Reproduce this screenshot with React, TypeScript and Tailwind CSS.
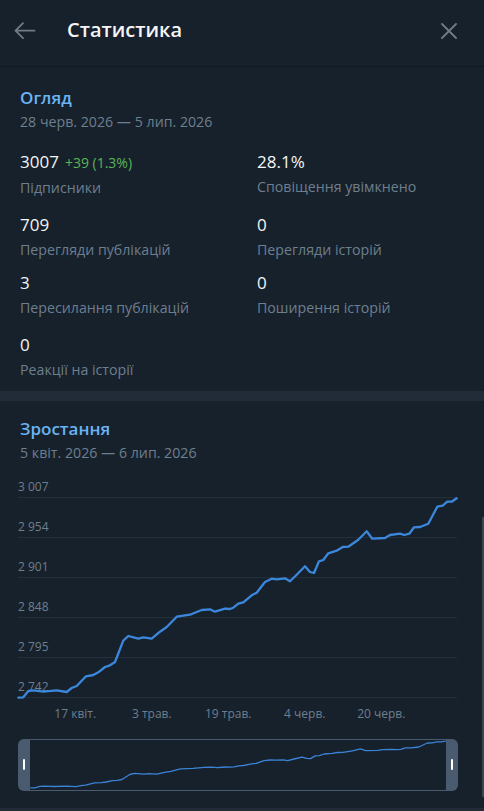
import React from "react";

type Stat = { value: string; label: string; delta?: string };

const statRows: { gap: string; items: Stat[] }[] = [
  {
    gap: "mt-[19.5px]",
    items: [
      { value: "3007", delta: "+39 (1.3%)", label: "Підписники" },
      { value: "28.1%", label: "Сповіщення увімкнено" },
    ],
  },
  {
    gap: "mt-[16px]",
    items: [
      { value: "709", label: "Перегляди публікацій" },
      { value: "0", label: "Перегляди історій" },
    ],
  },
  {
    gap: "mt-[12px]",
    items: [
      { value: "3", label: "Пересилання публікацій" },
      { value: "0", label: "Поширення історій" },
    ],
  },
  {
    gap: "mt-[15.5px]",
    items: [{ value: "0", label: "Реакції на історії" }],
  },
];

const yTicks = ["3 007", "2 954", "2 901", "2 848", "2 795", "2 742"];
const xTicks = ["17 квіт.", "3 трав.", "19 трав.", "4 черв.", "20 черв."];

// subscriber curve in plot space: 439 x 200, origin at the top grid line
const points: [number, number][] = [
  [0.3, 199.7], [5.3, 199.3], [10.3, 193], [15.3, 192.3], [25.3, 193.7],
  [38.7, 192.3], [48.7, 194], [53.7, 190], [58.7, 188], [68, 178.3],
  [75.3, 177], [80.3, 174.3], [87, 169], [92, 167.3], [97, 164],
  [105.3, 142.7], [110.3, 138], [120.3, 140.7], [125.3, 139.3], [133.7, 140.7],
  [142, 133.7], [148.7, 129], [158.7, 118.7], [172, 116.7], [183.7, 112],
  [192, 111.3], [197, 113.7], [207, 110.7], [212, 111], [215.3, 109.7],
  [220.3, 105.7], [225.3, 104.3], [233.7, 97.3], [238.7, 94.7], [247, 84],
  [253.7, 80.7], [258.7, 81.3], [267, 80.3], [272, 83.3], [278.7, 76.7],
  [287, 68.3], [292, 74], [296, 75], [301, 63.3], [305.3, 62],
  [310.3, 55.3], [318.7, 52.7], [324.7, 49], [330.3, 48.7], [340.3, 41.7],
  [348.7, 33.3], [354.3, 40.7], [367, 40], [372, 37], [382, 35.7],
  [386.3, 37], [391.3, 35.7], [396, 29.3], [402, 29], [410.3, 25.7],
  [419.3, 8.7], [424.7, 7.7], [429.3, 3.7], [433.7, 3.7], [438.7, 0.3],
];

const mainLine = points.map(([x, y]) => `${x},${y}`).join(" ");
const miniLine = points
  .map(([x, y]) => `${((x / 439) * 416).toFixed(1)},${(1 + y * 0.235).toFixed(1)}`)
  .join(" ");

const BackIcon = () => (
  <svg width="22" height="20" viewBox="0 0 22 20" fill="none" stroke="#6f7b87" strokeWidth="1.8" strokeLinecap="round" strokeLinejoin="round">
    <path d="M1.5 9.7H20.5M9 2.2L1.5 9.7L9 17.2" />
  </svg>
);

const CloseIcon = () => (
  <svg width="16" height="16" viewBox="0 0 16 16" fill="none" stroke="#6f7b87" strokeWidth="1.8" strokeLinecap="round">
    <path d="M1 1L15 15M15 1L1 15" />
  </svg>
);

const SectionTitle = ({ title, range }: { title: string; range: string }) => (
  <>
    <h2 className="text-[17px] leading-[24px] font-semibold text-[#6ab3f3]">{title}</h2>
    <p className="mt-[1.5px] text-[14.2px] leading-[20px] text-[#6d7f8f]">{range}</p>
  </>
);

export default function App() {
  return (
    <div
      className="relative h-[811px] w-[484px] overflow-hidden bg-[#17212b]"
      style={{ fontFamily: '"Open Sans", "Noto Sans", sans-serif' }}
    >
      <header className="flex h-[67px] items-center border-b border-[#101921] pr-[27px] pb-[4px] pl-[14px]">
        <BackIcon />
        <h1 className="mb-[2px] ml-[31px] text-[20px] leading-[28px] font-semibold text-[#f5f5f5]">Статистика</h1>
        <button className="ml-auto">
          <CloseIcon />
        </button>
      </header>

      <section className="px-[20px] pt-[19px] pb-[11.5px]">
        <SectionTitle title="Огляд" range="28 черв. 2026 — 5 лип. 2026" />
        {statRows.map((row, i) => (
          <div key={i} className={`grid grid-cols-[237px_1fr] ${row.gap}`}>
            {row.items.map((s) => (
              <div key={s.label}>
                <div className="flex items-baseline text-[17px] leading-[22px] text-[#f5f5f5]">
                  {s.value}
                  {s.delta && <span className="ml-[6px] text-[14px] text-[#58b656]">{s.delta}</span>}
                </div>
                <div className="mt-[4px] text-[14.2px] leading-[20px] text-[#6d7f8f]">{s.label}</div>
              </div>
            ))}
          </div>
        ))}
      </section>

      <div className="h-[10px] bg-[#212c38]" />

      <section className="pt-[16px]">
        <div className="px-[20px]">
          <SectionTitle title="Зростання" range="5 квіт. 2026 — 6 лип. 2026" />
        </div>

        <div className="relative ml-[18px] w-[439px]">
          {yTicks.map((t, i) => (
            <div
              key={t}
              className={`flex items-end border-b border-[#242f3c] pb-[2px] text-[12px] leading-[16px] text-[#6d7f8f] ${
                i === 0 ? "h-[35.5px]" : "h-[40px]"
              }`}
            >
              {t}
            </div>
          ))}
          <svg className="absolute top-[35px] left-0 overflow-visible" width="439" height="201" viewBox="0 0 439 201" fill="none">
            <polyline points={mainLine} stroke="#3b87dc" strokeWidth="2.3" strokeLinejoin="round" strokeLinecap="round" />
          </svg>
        </div>

        <div className="mt-[7.5px] flex pl-[37px] text-[12px] leading-[16px] text-[#6d7f8f]">
          {xTicks.map((t) => (
            <span key={t} className="w-[76.5px] text-center">
              {t}
            </span>
          ))}
        </div>

        <div className="mt-[17px] ml-[18px] flex h-[52px] w-[440px]">
          <div className="flex w-[12px] items-center justify-center rounded-l-[6px] bg-[#4b5b6f]">
            <div className="h-[11px] w-[2px] rounded-[1px] bg-white" />
          </div>
          <div className="flex-1 border-y border-[#4b5b6f]">
            <svg width="416" height="50" viewBox="0 0 416 50" fill="none">
              <polyline points={miniLine} stroke="#3a84d8" strokeWidth="1.3" strokeLinejoin="round" />
            </svg>
          </div>
          <div className="flex w-[12px] items-center justify-center rounded-r-[6px] bg-[#4b5b6f]">
            <div className="h-[11px] w-[2px] rounded-[1px] bg-white" />
          </div>
        </div>

        <div className="mt-[17px] h-[10px] bg-[#212c38]" />
      </section>

      <div className="absolute top-[517px] right-0 h-[280px] w-[2px] bg-[#3a4552]" />
    </div>
  );
}
